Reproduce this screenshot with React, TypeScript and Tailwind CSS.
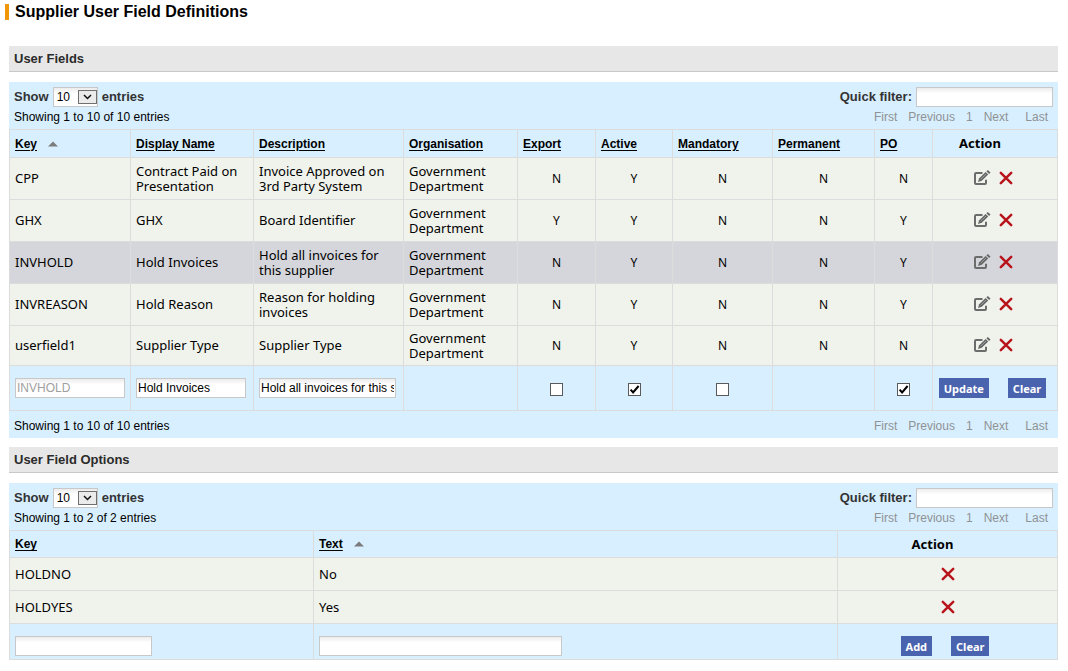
import { useState, type ReactNode } from "react";

interface UserField {
  key: string;
  name: string;
  description: string;
  organisation: string;
  flags: ("Y" | "N")[];
}

// flags: export, active, mandatory, permanent, PO
const userFields: UserField[] = [
  {
    key: "CPP",
    name: "Contract Paid on Presentation",
    description: "Invoice Approved on 3rd Party System",
    organisation: "Government Department",
    flags: ["N", "Y", "N", "N", "N"],
  },
  {
    key: "GHX",
    name: "GHX",
    description: "Board Identifier",
    organisation: "Government Department",
    flags: ["Y", "Y", "N", "N", "Y"],
  },
  {
    key: "INVHOLD",
    name: "Hold Invoices",
    description: "Hold all invoices for this supplier",
    organisation: "Government Department",
    flags: ["N", "Y", "N", "N", "Y"],
  },
  {
    key: "INVREASON",
    name: "Hold Reason",
    description: "Reason for holding invoices",
    organisation: "Government Department",
    flags: ["N", "Y", "N", "N", "Y"],
  },
  {
    key: "userfield1",
    name: "Supplier Type",
    description: "Supplier Type",
    organisation: "Government Department",
    flags: ["N", "Y", "N", "N", "N"],
  },
];

const fieldOptions = [
  { key: "HOLDNO", text: "No" },
  { key: "HOLDYES", text: "Yes" },
];

const fieldHeaders = [
  "Key",
  "Display Name",
  "Description",
  "Organisation",
  "Export",
  "Active",
  "Mandatory",
  "Permanent",
  "PO",
];

const cell = "border border-[#dcdcdc] px-[5px]";
const inputStyle =
  "h-5 border border-[#c8c8c8] bg-white bg-linear-to-b from-[#ececec] to-white to-30% px-px text-xs text-black outline-none disabled:text-[#a0a0a0]";

const EditIcon = () => (
  <svg width="18" height="16" viewBox="0 0 18 16" fill="none">
    <path
      d="M9.5 3H3Q2 3 2 4V13Q2 14 3 14H12Q13 14 13 13V9.8"
      stroke="#6c6c6c"
      strokeWidth="2"
    />
    <path d="M5 12L6.2 8.2L12.6 2L15.2 4.6L8.8 10.8Z" fill="#666" />
    <path d="M7.6 9.2L13 4" stroke="#a8a8a8" strokeWidth="0.8" />
    <path d="M13.4 1.3L14.8 0L17.5 2.6L16.1 3.9Z" fill="#666" />
  </svg>
);

const DeleteIcon = () => (
  <svg width="14" height="14" viewBox="0 0 14 14" fill="none">
    <path
      d="M1.8 1.9L12.2 12.1M12.2 1.9L1.8 12.1"
      stroke="#b8141b"
      strokeWidth="2.5"
      strokeLinecap="round"
    />
  </svg>
);

const SortIcon = () => (
  <svg className="ml-[11px] inline-block" width="10" height="6" viewBox="0 0 10 6">
    <path d="M0 5.5L5 0.5L10 5.5Z" fill="#7b7b7b" />
  </svg>
);

const SortHeader = ({ label, sorted }: { label: string; sorted?: boolean }) => (
  <th className={`${cell} text-left`}>
    <a
      href="#"
      className="font-['Liberation_Sans',Arial,sans-serif] text-xs font-bold underline underline-offset-2"
    >
      {label}
    </a>
    {sorted && <SortIcon />}
  </th>
);

const ActionHeader = () => (
  <th className={`${cell} text-center font-bold`}>
    <span className="mr-[30px]">Action</span>
  </th>
);

const Checkbox = ({ label, checked = false }: { label: string; checked?: boolean }) => (
  <span className="inline-grid align-middle">
    <input
      type="checkbox"
      aria-label={label}
      defaultChecked={checked}
      className="peer col-start-1 row-start-1 size-[13px] appearance-none border border-[#5a5a5a] bg-white"
    />
    <svg
      className="pointer-events-none invisible col-start-1 row-start-1 peer-checked:visible"
      width="13"
      height="13"
      viewBox="0 0 13 13"
      fill="none"
    >
      <path d="M2.6 6.6L5.1 9.4L10.6 3" stroke="#000" strokeWidth="2" />
    </svg>
  </span>
);

const ActionButton = ({ children }: { children: ReactNode }) => (
  <button
    type="button"
    className="h-5 bg-[#4a63ae] px-[5px] pt-px text-[11px] font-bold leading-5 text-white"
  >
    {children}
  </button>
);

const SectionBar = ({ title }: { title: string }) => (
  <h2 className="h-[26px] border-b border-[#c8c8c8] bg-[#e7e7e7] px-[5px] font-['Liberation_Sans',Arial,sans-serif] text-[13px] font-bold leading-[25px] text-[#2b2b2b]">
    {title}
  </h2>
);

const Pager = () => (
  <nav className="flex gap-[11px] pr-[5px] text-[#8f9294]">
    <a href="#">First</a>
    <a href="#">Previous</a>
    <a href="#">1</a>
    <a href="#">Next</a>
    <a href="#" className="ml-[6px]">
      Last
    </a>
  </nav>
);

const Summary = ({ total }: { total: number }) => (
  <div className="flex h-5 justify-between px-[5px] font-['Liberation_Sans',Arial,sans-serif] text-xs leading-5 text-black">
    <span>
      Showing 1 to {total} of {total} entries
    </span>
    <Pager />
  </div>
);

const Toolbar = ({ id, total }: { id: string; total: number }) => {
  const [filter, setFilter] = useState("");

  return (
    <div className="pt-[5px] pb-[2px]">
      <div className="flex h-5 justify-between px-[5px] font-['Liberation_Sans',Arial,sans-serif] text-[13px] leading-[19px] font-bold text-[#333]">
        <div className="flex gap-1">
          <label htmlFor={`${id}-length`}>Show</label>
          <div className="grid items-center">
            <select
              id={`${id}-length`}
              defaultValue="10"
              className={`${inputStyle} col-start-1 row-start-1 w-[45px] appearance-none pl-[3px] font-normal`}
            >
              <option>10</option>
              <option>25</option>
              <option>50</option>
            </select>
            <svg
              className="pointer-events-none col-start-1 row-start-1 mr-px justify-self-end"
              width="19"
              height="14"
              viewBox="0 0 19 14"
              fill="none"
            >
              <rect x="0.5" y="0.5" width="18" height="13" fill="#ebebeb" stroke="#6f6f6f" />
              <path d="M6 5L9.5 8.5L13 5" stroke="#111" strokeWidth="1.5" />
            </svg>
          </div>
          <span>entries</span>
        </div>
        <div className="flex gap-1">
          <label htmlFor={`${id}-filter`}>Quick filter:</label>
          <input
            id={`${id}-filter`}
            type="text"
            value={filter}
            onChange={(e) => setFilter(e.target.value)}
            className={`${inputStyle} w-[137px] font-normal`}
          />
        </div>
      </div>
      <Summary total={total} />
    </div>
  );
};

const UserFieldsTable = () => (
  <table className="w-full table-fixed border-collapse">
    <colgroup>
      <col className="w-[121px]" />
      <col className="w-[123px]" />
      <col className="w-[150px]" />
      <col className="w-[114px]" />
      <col className="w-[78px]" />
      <col className="w-[77px]" />
      <col className="w-[100px]" />
      <col className="w-[102px]" />
      <col className="w-[58px]" />
      <col className="w-[125px]" />
    </colgroup>
    <thead>
      <tr className="h-7">
        {fieldHeaders.map((label) => (
          <SortHeader key={label} label={label} sorted={label === "Key"} />
        ))}
        <ActionHeader />
      </tr>
    </thead>
    <tbody>
      {userFields.map((field) => (
        <tr
          key={field.key}
          className={`h-[42px] last:h-10 ${
            field.key === "INVHOLD" ? "bg-[#d5d6db]" : "bg-[#f0f3ec]"
          }`}
        >
          <td className={cell}>{field.key}</td>
          <td className={cell}>{field.name}</td>
          <td className={cell}>{field.description}</td>
          <td className={cell}>{field.organisation}</td>
          {field.flags.map((flag, i) => (
            <td key={i} className={`${cell} text-center text-xs`}>
              {flag}
            </td>
          ))}
          <td className={cell}>
            <div className="flex items-center justify-center gap-2 pr-[5px] pb-[2px]">
              <button type="button" aria-label="Edit">
                <EditIcon />
              </button>
              <button type="button" aria-label="Delete">
                <DeleteIcon />
              </button>
            </div>
          </td>
        </tr>
      ))}
    </tbody>
    <tfoot className="font-['Liberation_Sans',Arial,sans-serif]">
      <tr className="h-[45px]">
        <td className={cell}>
          <input
            aria-label="Key"
            disabled
            defaultValue="INVHOLD"
            className={`${inputStyle} block w-[110px]`}
          />
        </td>
        <td className={cell}>
          <input
            aria-label="Display Name"
            defaultValue="Hold Invoices"
            className={`${inputStyle} block w-[110px]`}
          />
        </td>
        <td className={cell}>
          <input
            aria-label="Description"
            defaultValue="Hold all invoices for this supplier"
            className={`${inputStyle} block w-[137px]`}
          />
        </td>
        <td className={cell} />
        <td className={`${cell} text-center`}>
          <Checkbox label="Export" />
        </td>
        <td className={`${cell} text-center`}>
          <Checkbox label="Active" checked />
        </td>
        <td className={`${cell} text-center`}>
          <Checkbox label="Mandatory" />
        </td>
        <td className={cell} />
        <td className={`${cell} text-center`}>
          <Checkbox label="PO" checked />
        </td>
        <td className={`${cell} font-['Noto_Sans',Verdana,sans-serif]`}>
          <div className="flex justify-center gap-[19px] pr-[5px]">
            <ActionButton>Update</ActionButton>
            <ActionButton>Clear</ActionButton>
          </div>
        </td>
      </tr>
    </tfoot>
  </table>
);

const FieldOptionsTable = () => (
  <table className="w-full table-fixed border-collapse">
    <colgroup>
      <col className="w-[304px]" />
      <col className="w-[524px]" />
      <col className="w-[220px]" />
    </colgroup>
    <thead>
      <tr className="h-[27px]">
        <SortHeader label="Key" />
        <SortHeader label="Text" sorted />
        <ActionHeader />
      </tr>
    </thead>
    <tbody>
      {fieldOptions.map((option) => (
        <tr key={option.key} className="h-[33px] bg-[#f0f3ec]">
          <td className={cell}>{option.key}</td>
          <td className={cell}>{option.text}</td>
          <td className={cell}>
            <div className="flex justify-center">
              <button type="button" aria-label="Delete">
                <DeleteIcon />
              </button>
            </div>
          </td>
        </tr>
      ))}
    </tbody>
    <tfoot>
      <tr>
        <td className={`${cell} pt-3 pb-[3px]`}>
          <input aria-label="Key" className={`${inputStyle} block w-[137px]`} />
        </td>
        <td className={`${cell} pt-3 pb-[3px]`}>
          <input aria-label="Text" className={`${inputStyle} block w-[243px]`} />
        </td>
        <td className={`${cell} pt-3 pb-[3px]`}>
          <div className="flex justify-center gap-[19px] pr-[5px]">
            <ActionButton>Add</ActionButton>
            <ActionButton>Clear</ActionButton>
          </div>
        </td>
      </tr>
    </tfoot>
  </table>
);

const App = () => {
  return (
    <main className="bg-white pt-1 pb-3 font-['Noto_Sans',Verdana,sans-serif] text-[13px] leading-[15px] text-black">
      <h1 className="ml-[5px] flex h-4 items-center gap-[6px] font-['Liberation_Sans',Arial,sans-serif] text-base font-bold">
        <span className="h-4 w-1 bg-[#f09609]" />
        Supplier User Field Definitions
      </h1>

      <div className="mt-[26px] ml-[9px] mr-[10px]">
        <SectionBar title="User Fields" />
        <section className="mt-[10px] bg-[#d8efff]">
          <Toolbar id="fields" total={10} />
          <UserFieldsTable />
          <div className="pt-[5px] pb-[2px]">
            <Summary total={10} />
          </div>
        </section>

        <div className="mt-[9px]">
          <SectionBar title="User Field Options" />
        </div>
        <section className="mt-[10px] bg-[#d8efff]">
          <Toolbar id="options" total={2} />
          <FieldOptionsTable />
        </section>
      </div>
    </main>
  );
};

export default App;
